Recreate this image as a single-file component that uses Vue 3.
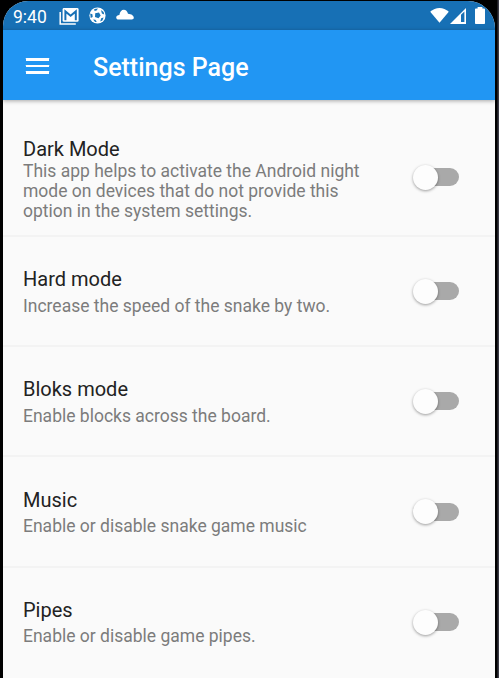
<script setup>
import { ref } from 'vue'

const settings = ref([
  { title: 'Dark Mode', lines: ['This app helps to activate the Android night', 'mode on devices that do not provide this', 'option in the system settings.'], on: false },
  { title: 'Hard mode', lines: ['Increase the speed of the snake by two.'], on: false },
  { title: 'Bloks mode', lines: ['Enable blocks across the board.'], on: false },
  { title: 'Music', lines: ['Enable or disable snake game music'], on: false },
  { title: 'Pipes', lines: ['Enable or disable game pipes.'], on: false },
])
</script>

<template>
  <div class="device">
    <main class="screen">
      <div class="status">
        <span class="clock">9:40</span>
        <svg class="mail" width="20" height="17" viewBox="0 0 20 17">
          <path d="M1.2 4v12h15.6" fill="none" stroke="#fff" stroke-width="1.5" />
          <rect x="3.6" y="0" width="16" height="13.8" rx="1.4" fill="#fff" />
          <path d="M6.4 12.2V3.4L11.6 7.7L16.8 3.4V12.2" fill="none" stroke="#1770b5" stroke-width="2" />
        </svg>
        <svg class="ball" width="17" height="17" viewBox="0 0 17 17">
          <circle cx="8.5" cy="8.5" r="8.1" fill="#fff" />
          <g fill="#1976b8">
            <path d="M6.2 6.3l3.8-.7 1.7 2.8-2.2 2.8-3.5-1.3z" />
            <path d="M5.2 2l3.8-.6-1.5 2.1-2 .6zM12 3.1l2.6 1.8.6 2.6-2.3-.9zM1.2 6.6l2.2.6.3 2.8-2 .9zM4.1 12.4l2.2.3 1.5 2.1-1.7.3zM12.2 11.2l2.4-.6-1.2 2.9-2.2 1z" />
          </g>
        </svg>
        <svg class="cloud" width="18" height="11" viewBox="0 0 18 11">
          <path d="M2.6 10.5C1.1 10.5.2 9.6.2 8.4.2 7 1.5 6.1 3.4 5.9 3.8 2.8 5.6.8 7.8.8c2.1 0 3.4 1.5 4.2 4 3.4.2 5.8 2 5.8 4 0 1.1-.8 1.7-2 1.7z" fill="#fff" />
        </svg>
        <span class="spacer" />
        <svg class="wifi" width="19" height="16" viewBox="0 0 19 16">
          <path d="M.2 4.7C5.4-.4 13.6-.4 18.8 4.7L9.5 15.8z" fill="#fff" />
        </svg>
        <svg class="signal" width="16" height="16" viewBox="0 0 16 16">
          <path d="M0 16L16 0v16z" fill="#fff" />
          <path d="M11 6.8l3.4-3.2V14H11z" fill="#1770b5" />
        </svg>
        <svg class="battery" width="10" height="17" viewBox="0 0 10 17">
          <path d="M2.6 0h4.8v1.6h1.8q.8 0 .8.8v13.8q0 .8-.8.8H.8Q0 17 0 16.2V2.4Q0 1.6.8 1.6h1.8z" fill="#fff" />
        </svg>
      </div>

      <header class="appbar">
        <button class="menu" aria-label="Menu"><i /><i /><i /></button>
        <h1>Settings Page</h1>
      </header>

      <section class="list">
        <div v-for="item in settings" :key="item.title" class="row" :class="{ tall: item.lines.length > 1 }">
          <div class="copy">
            <h2>{{ item.title }}</h2>
            <p><span v-for="line in item.lines" :key="line">{{ line }}</span></p>
          </div>
          <button class="switch" :class="{ on: item.on }" role="switch" :aria-checked="item.on" :aria-label="item.title" @click="item.on = !item.on">
            <span class="thumb" />
          </button>
        </div>
      </section>
    </main>
  </div>
</template>

<style>
body { margin: 0; overflow: hidden; }
</style>

<style scoped>
* { box-sizing: border-box; }
.device {
  width: 499px;
  height: 678px;
  padding: 1px 4px 0 3px;
  overflow: hidden;
  background: linear-gradient(to right, #000 497px, #3a3a45 498px);
  font-family: Roboto, sans-serif;
}
.screen {
  height: 677px;
  overflow: hidden;
  border-radius: 25px 27px 0 0;
  background: #fafafa;
}
.status {
  display: flex;
  height: 29px;
  padding: 0 10px 0 9px;
  background: #1770b5;
  color: #fff;
}
.status svg { flex: none; }
.clock { width: 47px; padding-left: 1px; font-size: 17.5px; line-height: 32px; white-space: nowrap; }
.mail { margin-top: 7px; }
.ball { margin: 6px 0 0 10px; }
.cloud { margin: 8px 0 0 10px; }
.spacer { flex: 1; }
.wifi { margin-top: 6px; }
.signal { margin: 7px 0 0 1px; }
.battery { margin: 6px 0 0 9px; }
.appbar {
  position: relative;
  display: flex;
  align-items: center;
  height: 70px;
  padding-left: 23px;
  background: #2196f3;
  box-shadow: 0 1px 4px rgba(0, 0, 0, .34);
}
.menu {
  display: flex;
  flex-direction: column;
  gap: 4px;
  width: 23px;
  margin: 2px 44px 0 0;
  padding: 0;
  border: 0;
  background: none;
}
.menu i { width: 23px; height: 2.6px; border-radius: .2px; background: #fff; }
h1 { margin: 5px 0 0; color: #fff; font-size: 25px; font-weight: 500; line-height: 30px; white-space: nowrap; }
.list { padding-top: 18px; }
.row {
  display: flex;
  justify-content: space-between;
  height: 110.3px;
  padding: 30.2px 36.5px 0 20px;
  border-bottom: 2px solid #f3f3f3;
}
.row:last-child { border-bottom: 0; }
.row.tall { height: 118.8px; padding-top: 19px; }
h2 { margin: 0; color: #222; font-size: 20px; font-weight: 400; line-height: 24px; white-space: nowrap; }
p { margin: 4.6px 0 0; color: #7c7c7c; font-size: 17.5px; line-height: 20px; white-space: nowrap; }
p span { display: block; }
.tall p { margin-top: 0; }
.switch {
  display: flex;
  align-items: center;
  width: 41.5px;
  height: 18px;
  margin-top: 15.2px;
  padding: 0;
  border: 0;
  border-radius: 9px;
  background: #a9a9a9;
}
.tall .switch { margin-top: 31px; }
.thumb {
  flex: none;
  width: 25px;
  height: 25px;
  margin-left: -4px;
  border-radius: 50%;
  background: #fdfdfd;
  box-shadow: 0 1px 3px rgba(0, 0, 0, .38);
}
.switch.on { background: #90caf9; }
.on .thumb { margin-left: 20px; background: #2196f3; }
</style>
